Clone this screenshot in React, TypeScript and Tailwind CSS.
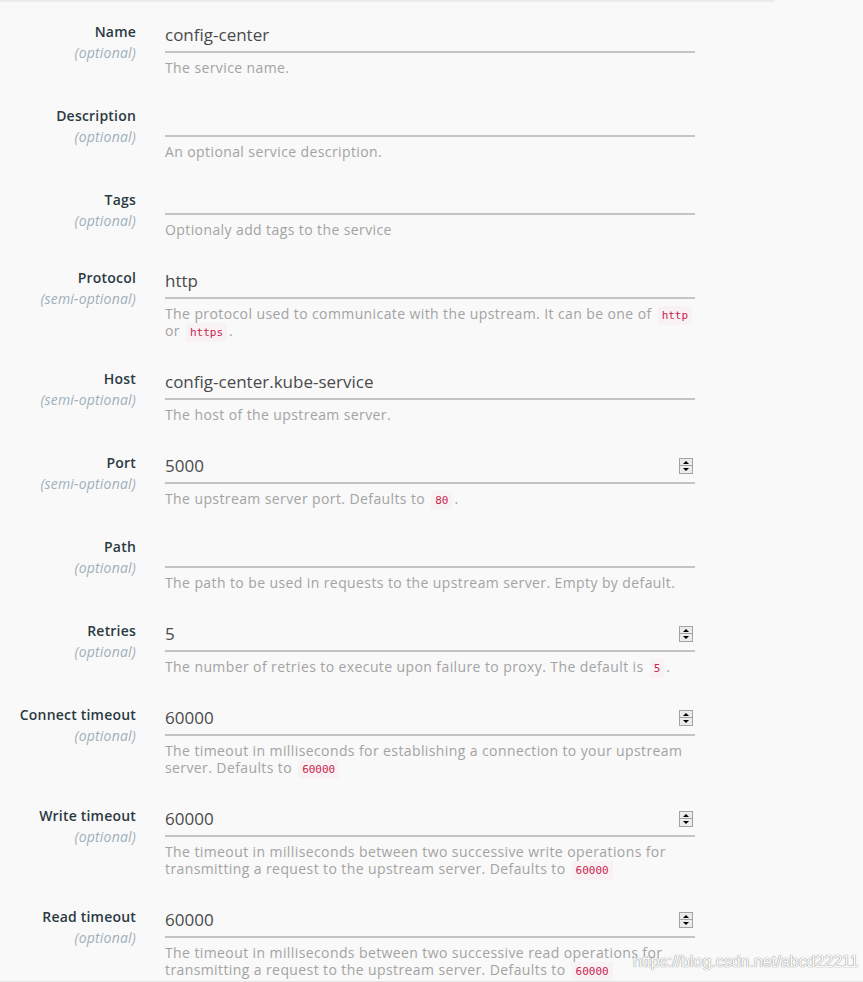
import React from "react";

type Field = {
  label: string;
  hint: string;
  value?: string;
  number?: boolean;
  short?: boolean;
  help: React.ReactNode;
};

const Code = ({ children }: { children: React.ReactNode }) => (
  <code className="mx-[2px] rounded-[3px] bg-[#f9f2f4] px-[4px] py-[3px] font-['DejaVu_Sans_Mono',monospace] text-[11px] leading-[10px] tracking-normal text-[#c7254e]">
    {children}
  </code>
);

const fields: Field[] = [
  { label: "Name", hint: "(optional)", value: "config-center", help: "The service name." },
  { label: "Description", hint: "(optional)", help: "An optional service description." },
  { label: "Tags", hint: "(optional)", short: true, help: "Optionaly add tags to the service" },
  {
    label: "Protocol",
    hint: "(semi-optional)",
    value: "http",
    help: (
      <>
        The protocol used to communicate with the upstream. It can be one of <Code>http</Code> or <Code>https</Code>.
      </>
    ),
  },
  { label: "Host", hint: "(semi-optional)", value: "config-center.kube-service", help: "The host of the upstream server." },
  {
    label: "Port",
    hint: "(semi-optional)",
    value: "5000",
    number: true,
    help: (
      <>
        The upstream server port. Defaults to <Code>80</Code>.
      </>
    ),
  },
  { label: "Path", hint: "(optional)", help: "The path to be used in requests to the upstream server. Empty by default." },
  {
    label: "Retries",
    hint: "(optional)",
    value: "5",
    number: true,
    help: (
      <>
        The number of retries to execute upon failure to proxy. The default is <Code>5</Code>.
      </>
    ),
  },
  {
    label: "Connect timeout",
    hint: "(optional)",
    value: "60000",
    number: true,
    help: (
      <>
        The timeout in milliseconds for establishing a connection to your upstream server. Defaults to <Code>60000</Code>
      </>
    ),
  },
  {
    label: "Write timeout",
    hint: "(optional)",
    value: "60000",
    number: true,
    help: (
      <>
        The timeout in milliseconds between two successive write operations for transmitting a request to the upstream
        server. Defaults to <Code>60000</Code>
      </>
    ),
  },
  {
    label: "Read timeout",
    hint: "(optional)",
    value: "60000",
    number: true,
    help: (
      <>
        The timeout in milliseconds between two successive read operations for transmitting a request to the upstream
        server. Defaults to <Code>60000</Code>
      </>
    ),
  },
];

const Spinner = () => (
  <div className="flex w-[14px] flex-col border border-[#a3a3a3] bg-[#ececec]">
    <div className="flex h-[7px] items-center justify-center border-b border-[#a3a3a3]">
      <div className="h-0 w-0 border-x-[3px] border-b-[3px] border-x-transparent border-b-black" />
    </div>
    <div className="flex h-[7px] items-center justify-center">
      <div className="h-0 w-0 border-x-[3px] border-t-[3px] border-x-transparent border-t-black" />
    </div>
  </div>
);

const Row = ({ field, first, last }: { field: Field; first: boolean; last: boolean }) => (
  <div className={`flex ${first ? "pt-[17px]" : "pt-[18px]"} ${last ? "pb-[3px]" : "pb-[9px]"}`}>
    <div className="w-[136px] shrink-0 pt-[2px] text-right">
      <div className="text-[14px] leading-[21px] font-semibold tracking-[0.2px] text-[#2b3a42]">{field.label}</div>
      <div className="text-[14px] leading-[21px] italic tracking-[0.2px] text-[#9fb0bb]">{field.hint}</div>
    </div>
    <div className="ml-[29px] w-[530px]">
      <div
        className={`flex items-center justify-between border-b-2 border-[#c4c4c4] pr-[2px] text-[17px] text-[#4a4a4a] ${
          field.short ? "h-[28px]" : "h-[34px]"
        }`}
      >
        <span>{field.value}</span>
        {field.number && <Spinner />}
      </div>
      <p className="mt-[6px] text-[14px] leading-[17px] tracking-[0.4px] text-[#a3a3a3]">{field.help}</p>
    </div>
  </div>
);

export default function App() {
  return (
    <div className="relative min-h-[982px] bg-[#f9f9f9] font-['Open_Sans',sans-serif]">
      <div className="w-[775px] border-t-2 border-[#ebebeb]">
        {fields.map((f, i) => (
          <Row key={f.label} field={f} first={i === 0} last={i === fields.length - 1} />
        ))}
      </div>
      <div className="border-t-2 border-[#e6e6e6]" />
      <div className="absolute top-[952px] left-[633px] whitespace-nowrap font-['Liberation_Sans',sans-serif] text-[16px] leading-[20px] text-white [text-shadow:0_0_1px_#888,0_0_1px_#888]">
        https://blog.csdn.net/abcd22211
      </div>
    </div>
  );
}
